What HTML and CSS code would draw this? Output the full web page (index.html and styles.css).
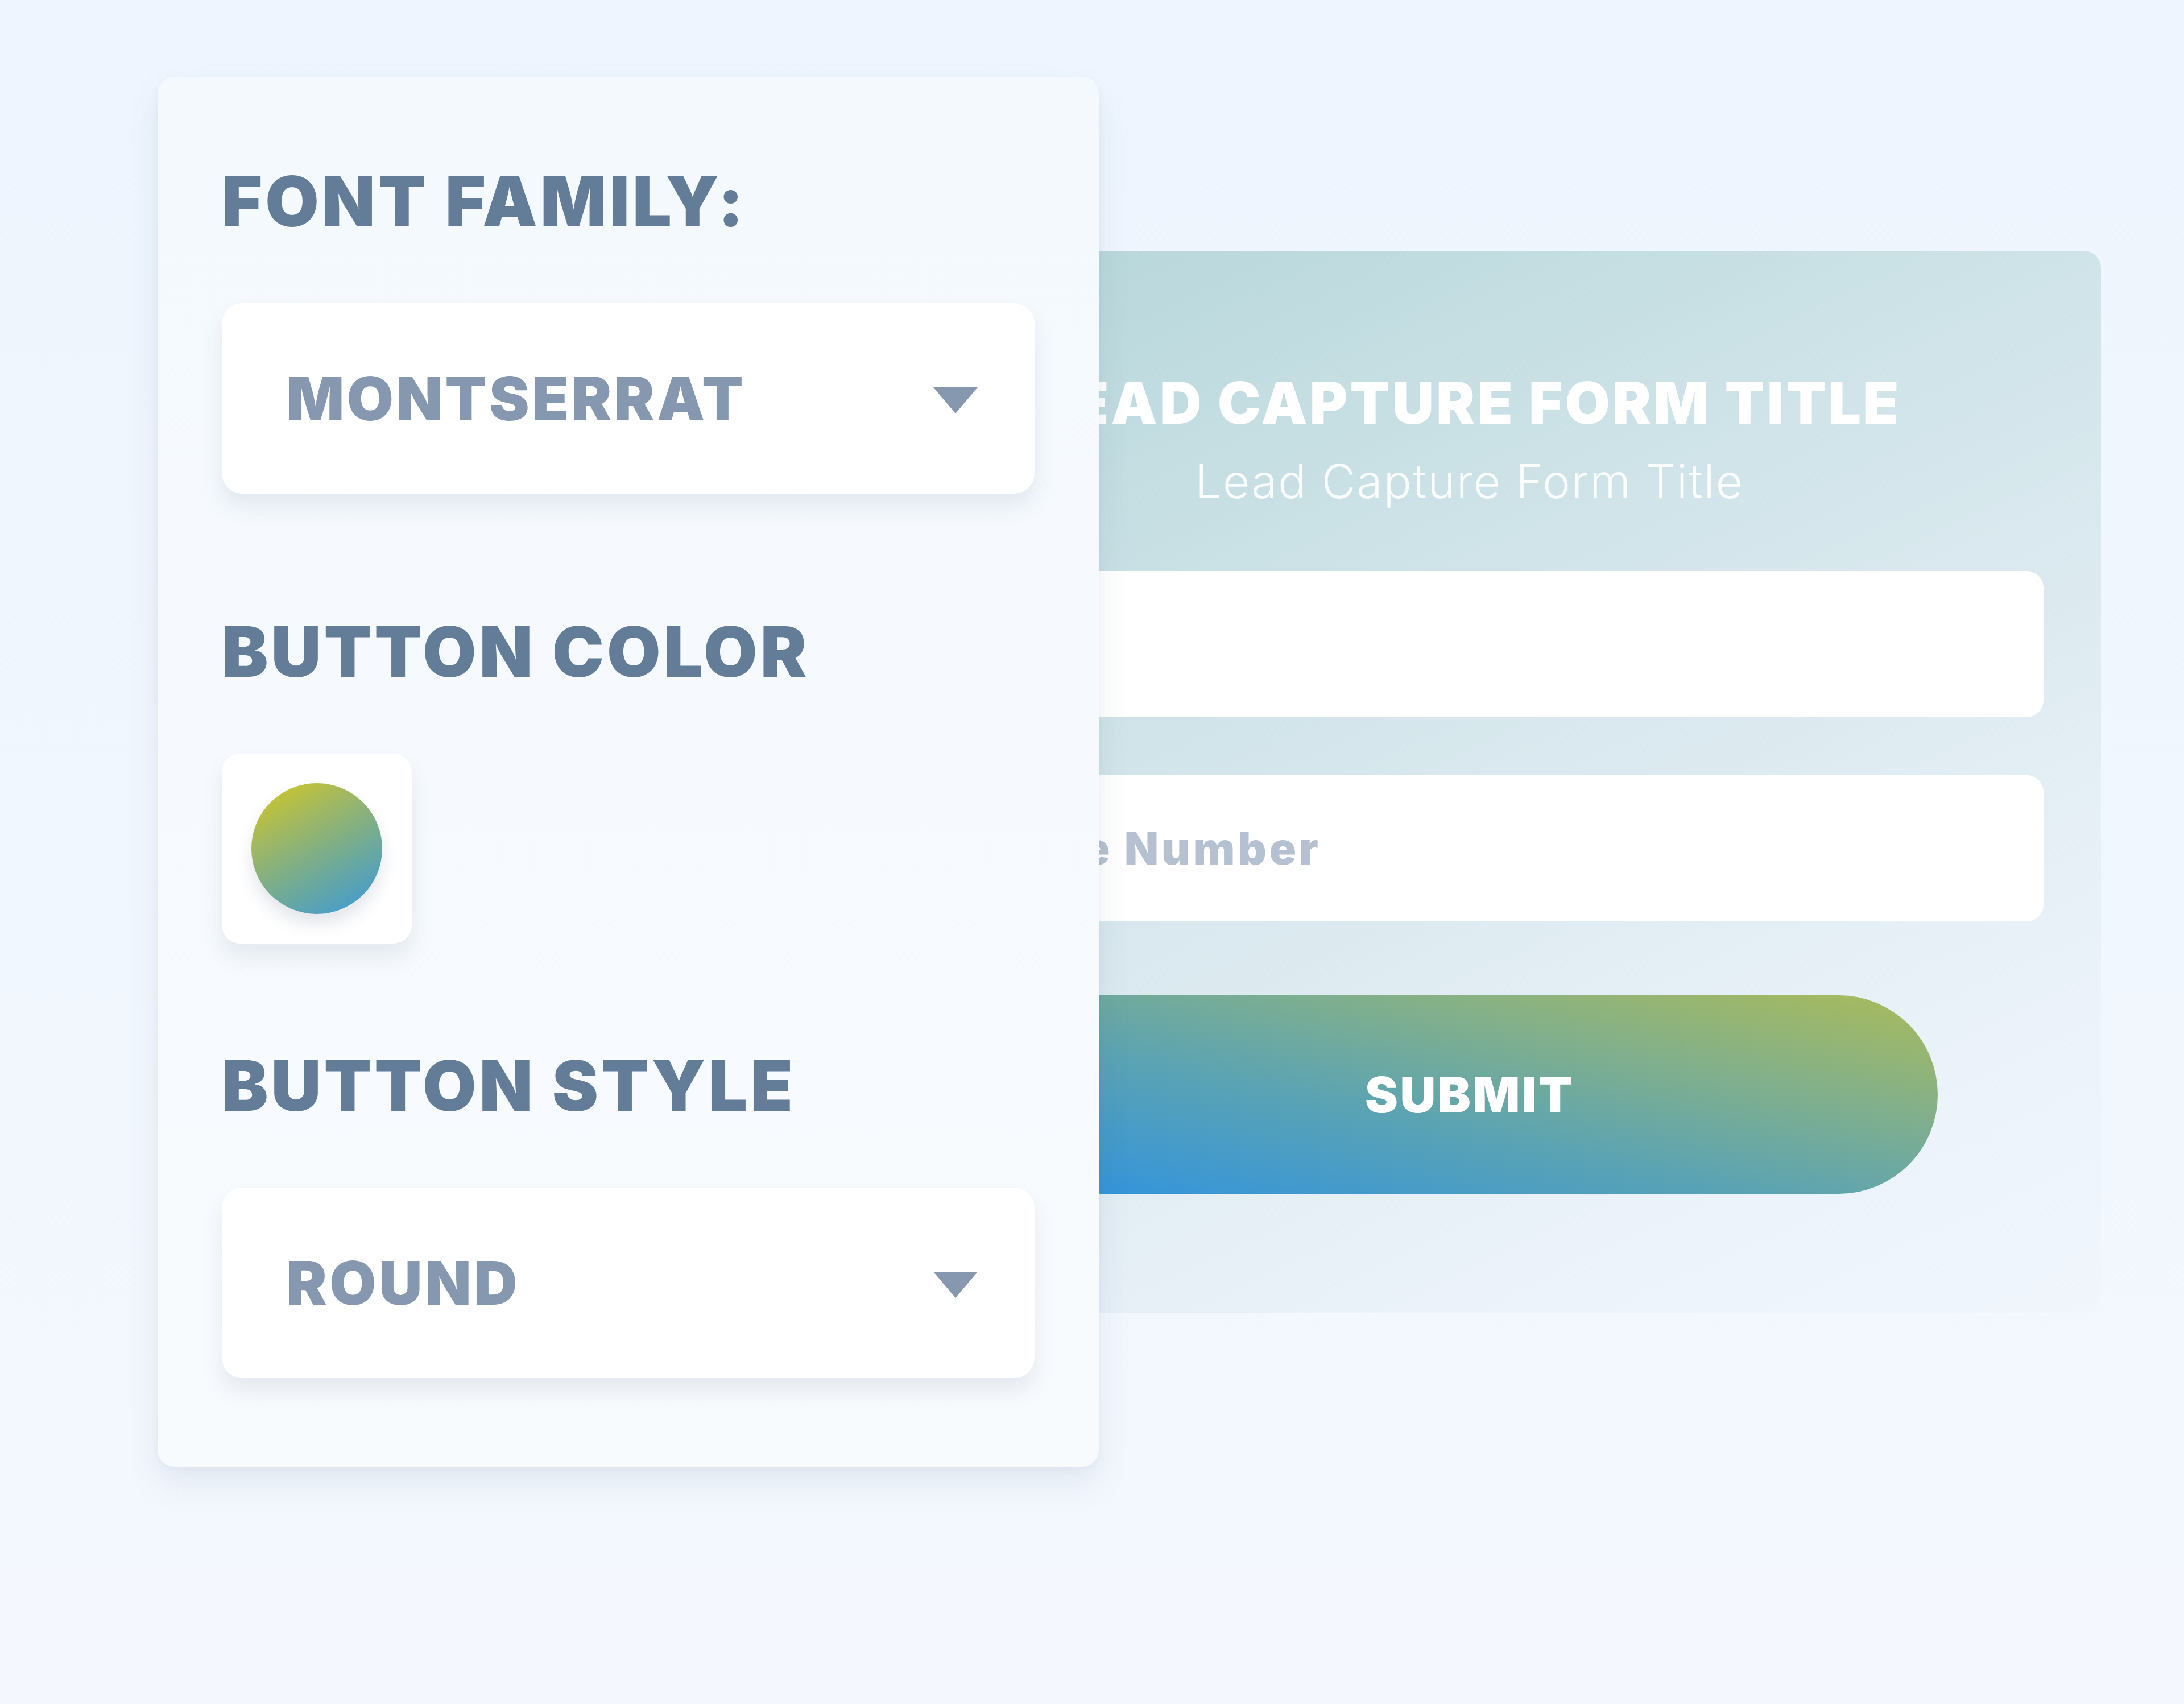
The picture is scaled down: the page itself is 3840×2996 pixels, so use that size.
FILE: index.html
```html
<!DOCTYPE html>
<html lang="en">
<head>
<meta charset="utf-8">
<title>Lead Capture Form Builder</title>
<link rel="stylesheet" href="styles.css">
</head>
<body>
<div class="stage">
  <aside class="panel">
    <section class="group">
      <h3 class="label">FONT FAMILY:</h3>
      <div class="select"><span class="select-text">MONTSERRAT</span><span class="caret"></span></div>
    </section>
    <section class="group group-color">
      <h3 class="label">BUTTON COLOR</h3>
      <div class="swatch"><span class="dot"></span></div>
    </section>
    <section class="group">
      <h3 class="label">BUTTON STYLE</h3>
      <div class="select"><span class="select-text">ROUND</span><span class="caret"></span></div>
    </section>
  </aside>
  <main class="card">
    <h1 class="title">LEAD CAPTURE FORM TITLE</h1>
    <p class="subtitle">Lead Capture Form Title</p>
    <div class="field"><span class="placeholder">Name</span></div>
    <div class="field field-2"><span class="placeholder">Phone Number</span></div>
    <div class="submit">SUBMIT</div>
  </main>
</div>
</body>
</html>
```

FILE: styles.css
```css
html, body {
  margin: 0;
  padding: 0;
}
body {
  width: 3840px;
  height: 2996px;
  background: linear-gradient(180deg, #eef5fe 0%, #f1f7fe 50%, #f4f8fe 100%);
  font-family: "Inter", "Liberation Sans", sans-serif;
  overflow: hidden;
}
.stage {
  display: flex;
  align-items: flex-start;
  padding: 135px 0 0 277px;
}
.panel {
  position: relative;
  z-index: 2;
  box-sizing: border-box;
  width: 1655px;
  padding: 158px 113px 156px;
  background: linear-gradient(180deg, #f4f9fe 0%, #f8fbfe 100%);
  border-radius: 30px;
  box-shadow: 0 30px 60px rgba(80, 100, 130, 0.10), 0 4px 12px rgba(80, 100, 130, 0.05);
}
.group + .group {
  margin-top: 217px;
}
.group-color + .group {
  margin-top: 189px;
}
.label {
  margin: 0 0 118px;
  font-size: 122px;
  line-height: 122px;
  font-weight: 900;
  color: #637c98;
  letter-spacing: 5px;
  white-space: nowrap;
}
.select {
  box-sizing: border-box;
  height: 335px;
  display: flex;
  align-items: center;
  justify-content: space-between;
  padding: 0 100px 0 114px;
  background: #ffffff;
  border-radius: 36px;
  box-shadow: 0 22px 36px rgba(60, 80, 110, 0.10);
}
.select-text {
  font-size: 106px;
  line-height: 106px;
  font-weight: 900;
  letter-spacing: 4.5px;
  color: #8598af;
}
.caret {
  width: 0;
  height: 0;
  margin-top: 6px;
  border-left: 39px solid transparent;
  border-right: 39px solid transparent;
  border-top: 46px solid #8598af;
}
.swatch {
  width: 334px;
  height: 334px;
  display: flex;
  align-items: center;
  justify-content: center;
  background: #ffffff;
  border-radius: 32px;
  box-shadow: 0 22px 36px rgba(60, 80, 110, 0.10);
}
.dot {
  width: 230px;
  height: 230px;
  border-radius: 50%;
  background: linear-gradient(150deg, #d6c91c 0%, #a4b95e 30%, #73ab94 60%, #3a98de 100%);
  box-shadow: 0 18px 28px rgba(60, 80, 110, 0.14);
}
.card {
  box-sizing: border-box;
  width: 2220px;
  margin: 306px 0 0 -458px;
  padding: 216px 101px 209px;
  border-radius: 30px;
  background: linear-gradient(155deg, #b3d5d8 0%, #d2e5ea 40%, #e9f1f8 75%, #f1f6fd 100%);
  text-align: center;
}
.title {
  margin: 0;
  font-size: 102px;
  line-height: 102px;
  font-weight: 900;
  letter-spacing: 4px;
  color: #ffffff;
  white-space: nowrap;
}
.subtitle {
  margin: 47px 0 0;
  font-size: 82px;
  line-height: 82px;
  font-weight: 300;
  letter-spacing: 2px;
  color: rgba(255, 255, 255, 0.92);
}
.field {
  box-sizing: border-box;
  height: 257px;
  margin-top: 116px;
  display: flex;
  align-items: center;
  padding: 0 108px;
  background: #ffffff;
  border-radius: 30px;
  text-align: left;
}
.field-2 {
  margin-top: 102px;
}
.placeholder {
  font-size: 78px;
  line-height: 78px;
  font-weight: 900;
  letter-spacing: 5px;
  color: #b5c1d0;
}
.submit {
  width: 1646px;
  height: 349px;
  margin: 130px auto 0;
  display: flex;
  align-items: center;
  justify-content: center;
  border-radius: 175px;
  background: linear-gradient(to top right, #2f92e0 0%, #5aa3b4 40%, #83b08a 70%, #aabb5a 100%);
  font-size: 87px;
  font-weight: 900;
  letter-spacing: 3.5px;
  color: #ffffff;
}
```
